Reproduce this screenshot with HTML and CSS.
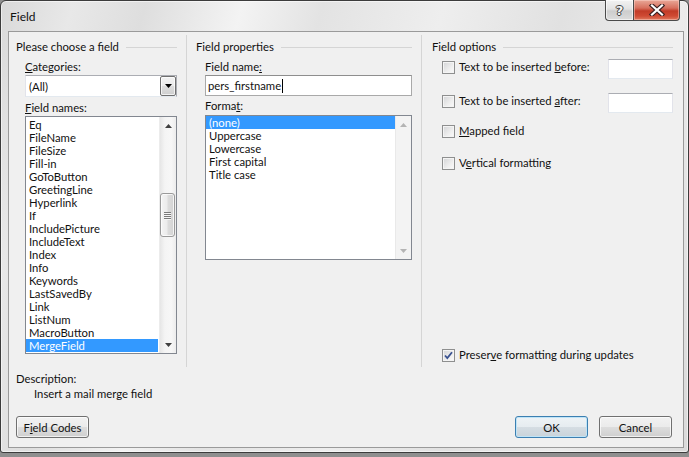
FILE: index.html
```html
<!DOCTYPE html>
<html>
<head>
<meta charset="utf-8">
<title>Field</title>
<link rel="stylesheet" href="styles.css">
</head>
<body>
<div class="window">
  <div class="titlebar">
    <span class="title">Field</span>
    <div class="caption">
      <div class="cap-btn cap-help">?</div>
      <div class="cap-btn cap-close">
        <svg width="16" height="12" viewBox="0 0 16 12">
          <path d="M3 1.5 L13 10.5 M13 1.5 L3 10.5" stroke="#3b2020" stroke-width="4.4" stroke-linecap="square" fill="none"/>
          <path d="M3 1.5 L13 10.5 M13 1.5 L3 10.5" stroke="#ffffff" stroke-width="2.2" stroke-linecap="square" fill="none"/>
        </svg>
      </div>
    </div>
  </div>
  <div class="panel">
    <div class="sections">
      <section class="sec sec-choose">
        <div class="sec-head"><span>Please choose a field</span><i class="rule"></i></div>
        <div class="indent">
          <div class="lbl"><u>C</u>ategories:</div>
          <div class="combo">
            <span class="combo-text">(All)</span>
            <span class="combo-btn">
              <svg width="7" height="4" viewBox="0 0 7 4"><path d="M0 0 H7 L3.5 4 Z" fill="#000"/></svg>
            </span>
          </div>
          <div class="lbl lbl-names"><u>F</u>ield names:</div>
          <div class="listbox list-fields">
            <ul class="items">
              <li>Eq</li>
              <li>FileName</li>
              <li>FileSize</li>
              <li>Fill-in</li>
              <li>GoToButton</li>
              <li>GreetingLine</li>
              <li>Hyperlink</li>
              <li>If</li>
              <li>IncludePicture</li>
              <li>IncludeText</li>
              <li>Index</li>
              <li>Info</li>
              <li>Keywords</li>
              <li>LastSavedBy</li>
              <li>Link</li>
              <li>ListNum</li>
              <li>MacroButton</li>
              <li class="sel">MergeField</li>
            </ul>
            <div class="vscroll">
              <div class="sb-arrow"><svg width="7" height="4" viewBox="0 0 7 4"><path d="M0 4 H7 L3.5 0 Z" fill="#404040"/></svg></div>
              <div class="sb-track">
                <div class="sb-thumb"><i></i><i></i><i></i><i></i></div>
              </div>
              <div class="sb-arrow"><svg width="7" height="4" viewBox="0 0 7 4"><path d="M0 0 H7 L3.5 4 Z" fill="#404040"/></svg></div>
            </div>
          </div>
        </div>
      </section>

      <section class="sec sec-props">
        <div class="sec-head"><span>Field properties</span><i class="rule"></i></div>
        <div class="indent">
          <div class="lbl">Field name<u>:</u></div>
          <div class="textbox tb-name"><span>pers_firstname</span><span class="caret"></span></div>
          <div class="lbl lbl-format">Forma<u>t</u>:</div>
          <div class="listbox list-format">
            <ul class="items">
              <li class="sel">(none)</li>
              <li>Uppercase</li>
              <li>Lowercase</li>
              <li>First capital</li>
              <li>Title case</li>
            </ul>
            <div class="vscroll vscroll-off">
              <div class="sb-arrow"><svg width="7" height="4" viewBox="0 0 7 4"><path d="M0 4 H7 L3.5 0 Z" fill="#b4b4b4"/></svg></div>
              <div class="sb-track"></div>
              <div class="sb-arrow"><svg width="7" height="4" viewBox="0 0 7 4"><path d="M0 0 H7 L3.5 4 Z" fill="#b4b4b4"/></svg></div>
            </div>
          </div>
        </div>
      </section>

      <section class="sec sec-options">
        <div class="sec-head"><span>Field options</span><i class="rule"></i></div>
        <div class="opt-row row1">
          <span class="check"></span>
          <span class="opt-label">Text to be inserted <u>b</u>efore:</span>
          <div class="textbox tb-small"></div>
        </div>
        <div class="opt-row row2">
          <span class="check"></span>
          <span class="opt-label">Text to be inserted <u>a</u>fter:</span>
          <div class="textbox tb-small"></div>
        </div>
        <div class="opt-row row3">
          <span class="check"></span>
          <span class="opt-label"><u>M</u>apped field</span>
        </div>
        <div class="opt-row row4">
          <span class="check"></span>
          <span class="opt-label">V<u>e</u>rtical formatting</span>
        </div>
        <div class="opt-row row5">
          <span class="check checked">
            <svg width="11" height="11" viewBox="0 0 11 11"><path d="M2 5.5 L4.3 8 L9 2.2" stroke="#3a5290" stroke-width="1.8" fill="none"/></svg>
          </span>
          <span class="opt-label">Preser<u>v</u>e formatting during updates</span>
        </div>
      </section>
    </div>

    <div class="desc">
      <div>Description:</div>
      <div class="desc-text">Insert a mail merge field</div>
    </div>

    <div class="footer">
      <div class="btn">F<u>i</u>eld Codes</div>
      <div class="btn btn-default">OK</div>
      <div class="btn btn-cancel">Cancel</div>
    </div>
  </div>
</div>
</body>
</html>
```

FILE: styles.css
```css
* { box-sizing: border-box; }

html, body {
  margin: 0;
  padding: 0;
}

body {
  width: 689px;
  height: 457px;
  overflow: hidden;
  background: #8f8f8f;
  font-family: Lato, "Noto Sans", "DejaVu Sans", sans-serif;
  font-size: 11.3px;
  color: #111;
}

u { text-decoration: underline; text-underline-offset: 1px; }

.window {
  width: 689px;
  height: 453px;
  border: 1px solid #3c3c3c;
  border-radius: 6px 6px 3px 3px;
  padding: 0 4px 4px 7px;
  display: flex;
  flex-direction: column;
  background: linear-gradient(105deg, #d9d9d9 0%, #e8e8e8 9%, #dedede 18%, #f3f3f3 30%, #e3e3e3 40%, #eeeeee 55%, #e1e1e1 70%, #ececec 84%, #dadada 100%);
  box-shadow: inset 0 0 0 1px rgba(255,255,255,0.55);
}

/* title bar */
.titlebar {
  height: 30px;
  display: flex;
  align-items: flex-start;
  flex: none;
}

.title {
  margin: 8px 0 0 2px;
  line-height: 15px;
  font-size: 12px;
}

.caption {
  margin-left: auto;
  margin-right: 4px;
  margin-top: -1px;
  display: flex;
}

.cap-btn {
  height: 21px;
  display: flex;
  align-items: center;
  justify-content: center;
  border: 1px solid #4a4a4a;
  border-top: none;
}

.cap-help {
  width: 28px;
  border-right: none;
  border-radius: 0 0 0 4px;
  background: linear-gradient(#f2f2f2 0%, #e2e2e2 45%, #cdcdcd 55%, #dcdcdc 100%);
  box-shadow: inset 0 0 0 1px rgba(255,255,255,0.6);
  font-family: "DejaVu Sans", sans-serif;
  font-weight: bold;
  font-size: 13px;
  color: #f4f4f4;
  text-shadow: 1px 0 #3e3e3e, -1px 0 #3e3e3e, 0 1px #3e3e3e, 0 -1px #3e3e3e;
}

.cap-close {
  width: 47px;
  border-radius: 0 0 4px 0;
  background: linear-gradient(#e9a898 0%, #d7705e 40%, #c23b27 55%, #cf4a33 80%, #e07a5f 100%);
  box-shadow: inset 0 0 0 1px rgba(255,220,210,0.45);
}

/* content panel */
.panel {
  border: 1px solid #9a9a9a;
  background: #f0f0f0;
  display: flex;
  flex-direction: column;
}

.sections {
  display: flex;
  margin-top: 3px;
  height: 332px;
}

.sec {
  padding-top: 4px;
  border-right: 1px solid #d5d5d5;
  display: flex;
  flex-direction: column;
}

.sec-choose { width: 178px; padding-left: 7px; padding-right: 9px; }
.sec-props { width: 235px; padding-left: 9px; padding-right: 9px; }
.sec-options { flex: 1; border-right: none; padding-left: 10px; padding-right: 10px; padding-bottom: 5px; }

.sec-head {
  display: flex;
  align-items: center;
  height: 15px;
  line-height: 15px;
  white-space: nowrap;
}

.sec-head .rule {
  flex: 1;
  height: 1px;
  background: #d5d5d5;
  margin-left: 7px;
  margin-top: 1px;
}

.indent { margin-left: 9px; }

.lbl {
  line-height: 15px;
  margin-top: 5px;
  white-space: nowrap;
}

.lbl-names { margin-top: 3px; }
.lbl-format { margin-top: 2px; }

/* combo */
.combo {
  margin-top: 1px;
  height: 22px;
  border: 1px solid #abadb3;
  border-bottom-color: #e3e9ef;
  border-left-color: #e2e3ea;
  background: #fff;
  display: flex;
  align-items: center;
}

.combo-text { padding-left: 3px; }

.combo-btn {
  margin-left: auto;
  width: 16px;
  height: 20px;
  border: 1px solid #707070;
  border-radius: 2px;
  background: linear-gradient(#f2f2f2 0%, #ebebeb 50%, #dddddd 51%, #cfcfcf 100%);
  box-shadow: inset 0 0 0 1px rgba(255,255,255,0.7);
  display: flex;
  align-items: center;
  justify-content: center;
}

/* textboxes */
.textbox {
  background: #fff;
  border: 1px solid #e2e3ea;
  border-top-color: #abadb3;
  border-bottom-color: #e3e9ef;
  display: flex;
  align-items: center;
}

.tb-name {
  margin-top: 1px;
  height: 21px;
  padding-left: 2px;
  border-color: #a9a9a9;
  border-top-color: #8e8e8e;
}

.caret {
  display: inline-block;
  width: 1px;
  height: 14px;
  background: #000;
  margin-left: 1px;
}

.tb-small {
  margin-left: auto;
  width: 65px;
  height: 20px;
}

/* list boxes */
.listbox {
  border: 1px solid #828790;
  background: #fff;
  display: flex;
}

.list-fields { margin-top: 1px; height: 238px; }
.list-format { margin-top: 2px; height: 145px; }

.items {
  list-style: none;
  margin: 0;
  padding: 1px 0;
  flex: 1;
  min-width: 0;
}

.list-format .items { padding: 0; }

.items li {
  height: 13px;
  line-height: 13px;
  padding-left: 3px;
  white-space: nowrap;
  overflow: hidden;
}

.list-fields .items li { margin-right: 1px; }

.items li.sel {
  background: #3399ff;
  color: #fff;
}

/* scrollbars */
.vscroll {
  width: 17px;
  display: flex;
  flex-direction: column;
  background: linear-gradient(90deg, #e6e6e6 0%, #f4f4f4 30%, #f7f7f7 70%, #ececec 100%);
  border-left: 1px solid #ececec;
}

.list-format .vscroll { width: 16px; background: #f3f3f3; border-left: 1px solid #e9e9e9; }

.sb-arrow {
  height: 17px;
  display: flex;
  align-items: center;
  justify-content: center;
  flex: none;
}

.sb-track { flex: 1; }

.sb-thumb {
  margin: 59px 1px 0 0;
  height: 44px;
  border: 1px solid #9a9a9a;
  border-radius: 3px;
  background: linear-gradient(90deg, #f4f4f4 0%, #ececec 45%, #dcdcdc 55%, #d3d3d3 100%);
  box-shadow: inset 0 0 0 1px rgba(255,255,255,0.75);
  display: flex;
  flex-direction: column;
  align-items: center;
  justify-content: center;
  gap: 1px;
}

.sb-thumb i {
  display: block;
  width: 7px;
  height: 1px;
  background: #7b7b7b;
  box-shadow: 0 1px 0 #f6f6f6;
}

/* options */
.opt-row {
  display: flex;
  align-items: flex-start;
  margin-left: 10px;
  white-space: nowrap;
}

.row1 { margin-top: 5px; height: 20px; }
.row2 { margin-top: 14px; height: 20px; }
.row3 { margin-top: 10px; }
.row4 { margin-top: 17px; }
.row5 { margin-top: auto; }

.check {
  width: 13px;
  height: 13px;
  margin-top: 2px;
  flex: none;
  border: 1px solid #8e8f8f;
  background: linear-gradient(135deg, #d3d4d6 0%, #eeeeee 60%, #fbfbfb 100%);
  box-shadow: inset 0 0 0 1px #f4f4f4;
  display: flex;
  align-items: center;
  justify-content: center;
}

.opt-label {
  margin-left: 4px;
  line-height: 15px;
}

/* description */
.desc {
  margin-top: 4px;
  padding-left: 7px;
  line-height: 15px;
}

.desc-text { margin-left: 18px; }

/* footer buttons */
.footer {
  margin-top: 15px;
  padding: 0 11px 9px 7px;
  display: flex;
}

.btn {
  width: 73px;
  height: 22px;
  border: 1px solid #707070;
  border-radius: 3px;
  background: linear-gradient(#f2f2f2 0%, #ebebeb 50%, #dddddd 51%, #cfcfcf 100%);
  box-shadow: inset 0 0 0 1px rgba(255,255,255,0.7);
  display: flex;
  align-items: center;
  justify-content: center;
  line-height: 15px;
}

.btn-default {
  margin-left: auto;
  border-color: #3c7fb1;
  box-shadow: inset 0 0 0 1px #bfe4f7;
  background: linear-gradient(#eef3f6 0%, #e6ecf0 50%, #d5dde3 51%, #c9d3da 100%);
}

.btn-cancel { margin-left: 11px; }
```
